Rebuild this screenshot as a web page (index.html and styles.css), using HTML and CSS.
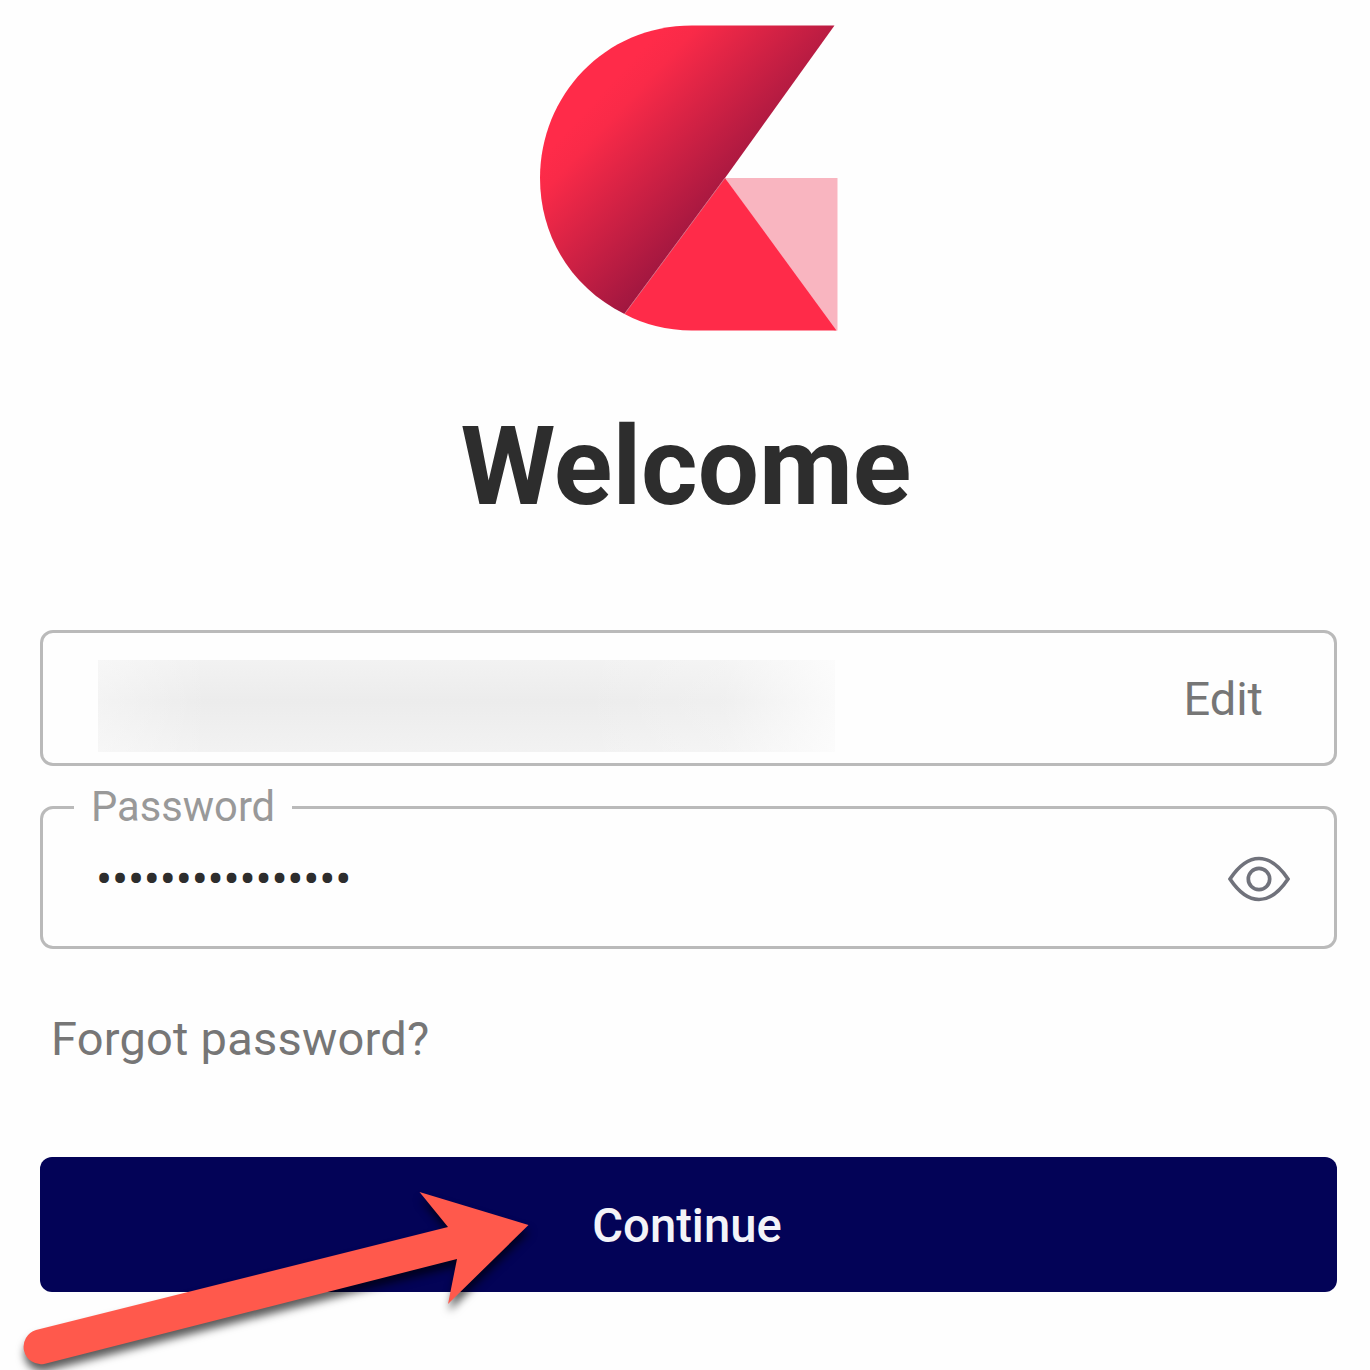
FILE: index.html
```html
<!DOCTYPE html>
<html lang="en">
<head>
<meta charset="utf-8">
<title>Welcome</title>
<link rel="stylesheet" href="styles.css">
</head>
<body>
<main class="login">
  <svg class="logo" width="298" height="306" viewBox="540 25 298 306">
    <defs>
      <linearGradient id="fade" gradientUnits="userSpaceOnUse" x1="594" y1="101" x2="725" y2="223">
        <stop offset="0" stop-color="#ff2b49"/>
        <stop offset=".14" stop-color="#f92a48"/>
        <stop offset="1" stop-color="#99153f"/>
      </linearGradient>
    </defs>
    <path fill="#f9b5c0" d="M725 178H837.500V330.500H834Z"/>
    <path fill="#ff2b49" d="M725 178L836.500 330.500H692Q654 330 624.500 314Z"/>
    <path fill="url(#fade)" d="M834.500 25.500H692C604 25.500 540 96 540 178C540 237 572 288 624.500 314L725 178Z"/>
    <path stroke="#d9667f" stroke-width="1" d="M725 178L624.500 314"/>
  </svg>
  <h1 class="title">Welcome</h1>
  <form class="form">
    <div class="field">
      <span class="redacted"></span>
      <a class="edit">Edit</a>
    </div>
    <fieldset class="password">
      <legend class="label">Password</legend>
      <div class="row">
        <span class="dots">••••••••••••••••</span>
        <svg class="eye" width="62" height="46" viewBox="0 0 62 46" fill="none" stroke="#70727b" stroke-width="3.700">
          <path d="M2 23C10 11 19 2.500 31 2.500S52 11 60 23C52 35 43 43.500 31 43.500S10 35 2 23Z"/>
          <circle cx="31" cy="23" r="10.700"/>
        </svg>
      </div>
    </fieldset>
    <a class="forgot">Forgot password?</a>
    <button class="continue" type="button">Continue</button>
  </form>
</main>
<svg class="arrow" width="560" height="200" viewBox="0 1170 560 200">
  <path fill="#ff594c" d="M36 1330L448 1227L419.500 1192L528.500 1225L448 1304L457 1259L44 1364A17.500 17.500 0 0 1 36 1330Z"/>
</svg>
</body>
</html>
```
FILE: styles.css
```css
* { box-sizing: border-box; }

body {
  margin: 0;
  height: 1370px;
  overflow: hidden;
  position: relative;
  background: #fefefe;
  font-family: Roboto, sans-serif;
}

.login {
  display: flex;
  flex-direction: column;
  align-items: center;
  padding: 25px 33px 0 40px;
}

.logo { display: block; }

.title {
  margin: 76px 5px 0 0;
  font-size: 108.500px;
  line-height: 120px;
  font-weight: 700;
  color: #2d2d2d;
}

.form {
  display: flex;
  flex-direction: column;
  align-self: stretch;
  margin-top: 103px;
}

.field {
  display: flex;
  align-items: center;
  justify-content: space-between;
  height: 136px;
  padding: 0 71px 0 55px;
  border: 3px solid #bababa;
  border-radius: 13px;
}

.redacted {
  width: 737px;
  height: 92px;
  margin-top: 16px;
  background:
    linear-gradient(90deg, rgba(254,254,254,.4), transparent 15%, transparent 65%, rgba(254,254,254,.2) 85%, rgba(254,254,254,.8)),
    linear-gradient(#f2f2f2, #ececec 45%, #f2f2f2);
}

.edit {
  font-size: 47px;
  color: #767676;
}

.password {
  height: 162px;
  margin: 21px 0 0;
  padding: 0 44px 0 31px;
  border: 3px solid #bababa;
  border-radius: 13px;
}

.label {
  height: 40px;
  padding: 0 17px 0 17px;
  font-size: 41.700px;
  line-height: 40px;
  color: #999;
}

.row {
  display: flex;
  align-items: center;
  justify-content: space-between;
  height: 104px;
}

.dots {
  padding-left: 22px;
  font-size: 48px;
  letter-spacing: -.25px;
  color: #2d2d2d;
}

.forgot {
  margin: 60px 0 0 11px;
  font-size: 47px;
  letter-spacing: .22px;
  line-height: 60px;
  color: #767676;
}

.continue {
  height: 135px;
  margin-top: 88px;
  padding: 2px 3px 0 0;
  border: 0;
  border-radius: 12px;
  background: #030357;
  color: #f3f3f8;
  font: 500 47.200px Roboto, sans-serif;
}

.arrow {
  position: absolute;
  left: 0;
  top: 1170px;
  filter: drop-shadow(1px 7px 4px rgba(0,0,0,.65));
}
```
